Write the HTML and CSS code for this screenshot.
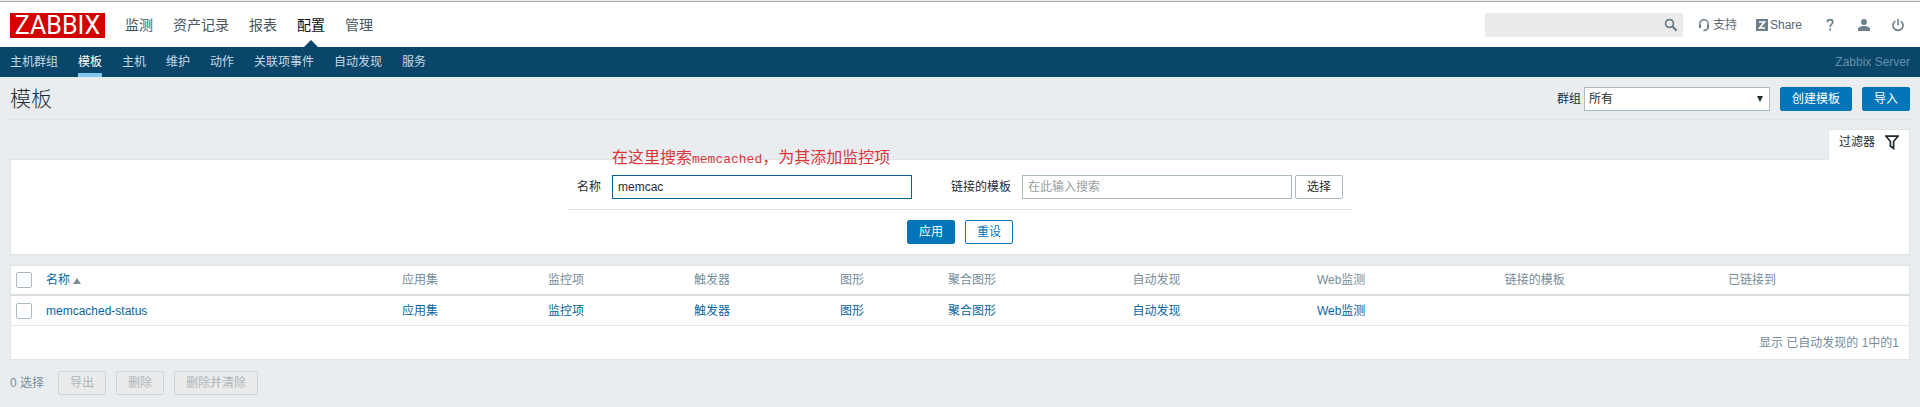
FILE: index.html
```html
<!DOCTYPE html>
<html lang="zh-CN">
<head>
<meta charset="utf-8">
<title>模板</title>
<link rel="stylesheet" href="styles.css">
</head>
<body>
<header class="top">
  <a class="logo" href="#">ZABBIX</a>
  <nav class="main-nav">
    <a href="#">监测</a>
    <a href="#">资产记录</a>
    <a href="#">报表</a>
    <a href="#" class="selected">配置</a>
    <a href="#">管理</a>
  </nav>
  <form class="search">
    <input type="text" aria-label="搜索">
    <button type="button" aria-label="搜索">
      <svg width="14" height="14" viewBox="0 0 14 14"><circle cx="5.5" cy="5.5" r="3.9" fill="none" stroke="currentColor" stroke-width="1.8"/><path d="M8.4 8.4L12.6 12.6" stroke="currentColor" stroke-width="2.2"/></svg>
    </button>
  </form>
  <div class="tools">
    <a class="support" href="#">
      <svg width="12" height="14" viewBox="0 0 12 14" fill="none" stroke="currentColor"><path d="M1.7 8V6a4.3 4.3 0 0 1 8.6 0v2c0 2.600-1 4-3.300 4.300" stroke-width="1.400"/><path d="M2 6.500v3.500M10 6.500v3.500" stroke-width="2.200"/><path d="M5.500 12.300h2" stroke-width="1.800"/></svg>
      <span>支持</span>
    </a>
    <a class="share" href="#">
      <svg width="12" height="12" viewBox="0 0 12 12"><path fill="currentColor" d="M0 0h12v12H0z"/><path d="M3 3h5.500L3.500 9H9" fill="none" stroke="#fff" stroke-width="1.600"/></svg>
      <span>Share</span>
    </a>
    <a class="tool" href="#" aria-label="帮助"><svg width="12" height="14" viewBox="0 0 12 14"><path d="M3.300 4.200C3.300 2.400 4.400 1.600 6 1.600s2.800.9 2.800 2.400C8.800 6 6.100 6.300 6.100 9" fill="none" stroke="currentColor" stroke-width="1.600"/><path fill="currentColor" d="M5.200 10.500H7v1.900H5.200z"/></svg></a>
    <a class="tool" href="#" aria-label="用户"><svg width="12" height="14" viewBox="0 0 12 14" fill="currentColor"><circle cx="6" cy="4" r="2.900"/><path d="M0 13v-2c0-2 3-3 6-3s6 1 6 3v2z"/></svg></a>
    <a class="tool" href="#" aria-label="退出"><svg width="12" height="14" viewBox="0 0 12 14" fill="none" stroke="currentColor" stroke-width="1.600"><path d="M3.200 3.200a5 5 0 1 0 5.600 0M6 1v6.300"/></svg></a>
  </div>
</header>
<nav class="sub-nav">
  <a href="#">主机群组</a>
  <a href="#" class="selected">模板</a>
  <a href="#">主机</a>
  <a href="#">维护</a>
  <a href="#">动作</a>
  <a href="#">关联项事件</a>
  <a href="#">自动发现</a>
  <a href="#">服务</a>
  <span class="server">Zabbix Server</span>
</nav>
<main>
  <div class="title-row">
    <h1>模板</h1>
    <div class="title-actions">
      <label for="group">群组</label>
      <div class="select-wrap"><select id="group"><option>所有</option></select></div>
      <button type="button" class="btn primary">创建模板</button>
      <button type="button" class="btn primary">导入</button>
    </div>
  </div>
  <div class="tab-row">
    <button type="button" class="filter-tab">过滤器
      <svg width="14" height="15" viewBox="0 0 14 15"><path d="M1 1.200h12L8.600 6.500v7L5.400 11V6.500z" fill="none" stroke="#1f2c33" stroke-width="1.700"/></svg>
    </button>
  </div>
  <form class="filter">
    <p class="note">在这里搜索<span>memcached</span>，为其添加监控项</p>
    <div class="fields">
      <div class="field">
        <label for="name">名称</label>
        <input id="name" class="name-input" type="text" value="memcac">
      </div>
      <div class="field">
        <label for="linked">链接的模板</label>
        <div class="picker">
          <input id="linked" class="linked-input" type="text" placeholder="在此输入搜索">
          <button type="button" class="btn plain">选择</button>
        </div>
      </div>
    </div>
    <div class="filter-actions">
      <button type="button" class="btn primary">应用</button>
      <button type="button" class="btn outline">重设</button>
    </div>
  </form>
  <table class="list">
    <colgroup>
      <col class="c-check"><col class="c-name"><col class="c-count"><col class="c-count"><col class="c-count"><col class="c-graph"><col class="c-mid"><col class="c-mid"><col class="c-web"><col class="c-linked"><col>
    </colgroup>
    <thead>
      <tr>
        <th><input type="checkbox" aria-label="全选"></th>
        <th><a href="#">名称 <span class="sort"></span></a></th>
        <th>应用集</th><th>监控项</th><th>触发器</th><th>图形</th><th>聚合图形</th><th>自动发现</th><th>Web监测</th><th>链接的模板</th><th>已链接到</th>
      </tr>
    </thead>
    <tbody>
      <tr>
        <td><input type="checkbox" aria-label="memcached-status"></td>
        <td><a href="#">memcached-status</a></td>
        <td><a href="#">应用集</a></td><td><a href="#">监控项</a></td><td><a href="#">触发器</a></td><td><a href="#">图形</a></td><td><a href="#">聚合图形</a></td><td><a href="#">自动发现</a></td><td><a href="#">Web监测</a></td><td></td><td></td>
      </tr>
    </tbody>
    <tfoot>
      <tr><td colspan="11">显示 已自动发现的 1中的1</td></tr>
    </tfoot>
  </table>
  <div class="bulk">
    <span>0 选择</span>
    <button type="button" class="btn" disabled>导出</button>
    <button type="button" class="btn" disabled>删除</button>
    <button type="button" class="btn" disabled>删除并清除</button>
  </div>
</main>
</body>
</html>
```
FILE: styles.css
```css
* { box-sizing: border-box; }

body {
  margin: 0;
  background: #e9edf0;
  color: #1f2c33;
  font: 12px/18px "Liberation Sans", "Noto Sans CJK SC", sans-serif;
}

a { color: #0a66a0; text-decoration: none; }
svg { display: block; }
input, select, button { font: inherit; color: inherit; margin: 0; }

/* Header */
.top {
  display: flex;
  align-items: center;
  height: 47px;
  margin-top: 1px;
  padding: 0 10px;
  background: #fff;
  border-top: 1px solid #acaeb0;
  margin-bottom: -1px;
}
.logo {
  width: 95px;
  background: #d40000;
  color: #fff;
  font: 25px/25px Roboto, sans-serif;
  text-align: center;
}
.main-nav {
  display: flex;
  align-self: stretch;
  align-items: center;
  gap: 20px;
  margin-left: 20px;
  font-size: 14px;
}
.main-nav a {
  display: flex;
  align-items: center;
  height: 100%;
  color: #48565e;
}
.main-nav .selected { position: relative; color: #0e1012; }
.main-nav .selected::after {
  content: "";
  position: absolute;
  bottom: 0;
  left: 50%;
  margin-left: -8px;
  border: 8px solid transparent;
  border-top: 0;
  border-bottom-color: #0a466a;
}
.search {
  display: flex;
  width: 198px;
  height: 24px;
  margin-left: auto;
  background: #ebebeb;
}
.search input { flex: 1; min-width: 0; border: 0; background: none; }
.search button {
  display: flex;
  align-items: center;
  padding: 0 5px;
  border: 0;
  background: none;
  color: #6d7f89;
}
.tools { display: flex; align-items: center; margin-right: 6px; }
.tools a { color: #6d7f89; }
.tools span { color: #5a6972; }
.support, .share { display: flex; align-items: center; gap: 3px; margin-left: 15px; }
.share { gap: 2px; margin-left: 19px; }
.tool { margin-left: 22px; }

/* Section navigation */
.sub-nav {
  position: relative;
  display: flex;
  gap: 20px;
  height: 30px;
  padding: 0 10px;
  background: #0a466a;
  line-height: 30px;
}
.sub-nav a { color: #c5dbe8; }
.sub-nav .selected { color: #fff; border-bottom: 4px solid #80c7f2; }
.server { margin-left: auto; color: #6290ac; }

/* Page title */
main { padding: 0 10px; }
.title-row {
  display: flex;
  justify-content: space-between;
  align-items: center;
  height: 43px;
  padding-top: 2px;
  border-bottom: 1px solid #dfe4e7;
}
h1 { margin: 0; font-size: 21px; line-height: 32px; font-weight: 300; }
.title-actions { display: flex; align-items: center; }
.select-wrap { position: relative; margin: 0 10px 0 3px; }
.select-wrap select {
  display: block;
  appearance: none;
  width: 186px;
  height: 24px;
  padding: 0 4px;
  border: 1px solid #acbbc2;
  border-radius: 0;
  background: #fff;
}
.select-wrap::after {
  content: "";
  position: absolute;
  top: 9px;
  right: 7px;
  border: 3px solid transparent;
  border-top: 6px solid #1f2c33;
  border-bottom: 0;
}
.title-actions .btn + .btn { margin-left: 10px; }

.btn {
  height: 24px;
  padding: 0 11px;
  border: 1px solid #0275b8;
  border-radius: 2px;
  line-height: 22px;
  white-space: nowrap;
}
.primary { background: #0275b8; color: #fff; }
.outline { background: #fff; color: #0275b8; }
.plain { background: #fff; border-color: #acbbc2; }
.btn:disabled { background: #ebebeb; border-color: #ccd5d9; color: #acb6ba; }

/* Filter */
.tab-row { display: flex; justify-content: flex-end; margin-top: 9px; }
.filter-tab {
  position: relative;
  z-index: 1;
  display: flex;
  align-items: center;
  gap: 10px;
  height: 31px;
  margin-bottom: -1px;
  padding: 0 10px 6px;
  border: 1px solid #dfe4e7;
  border-bottom: 0;
  background: #fff;
}
.filter {
  position: relative;
  display: flex;
  flex-direction: column;
  align-items: center;
  padding: 15px 0 10px;
  background: #fff;
  border: 1px solid #dfe4e7;
}
.note {
  position: absolute;
  left: 50%;
  top: -14px;
  margin: 0 0 0 -348px;
  color: #d9363a;
  font-size: 16px;
  line-height: 24px;
  white-space: nowrap;
}
.note span { font-family: "Liberation Mono", monospace; font-size: 13px; }
.fields {
  display: flex;
  justify-content: space-between;
  width: 784px;
  padding: 0 9px 10px;
  border-bottom: 1px solid #dfe4e7;
}
.field { display: flex; align-items: center; gap: 11px; }
.picker { display: flex; gap: 3px; }
.filter input {
  height: 24px;
  padding: 0 5px;
  border: 1px solid #acbbc2;
  background: #fff;
}
.filter .name-input { width: 300px; border-color: #0a5f94; }
.filter .linked-input { width: 270px; }
.filter input::placeholder { color: #9aa0a3; }
.filter-actions { display: flex; gap: 10px; margin-top: 10px; }

/* Template list */
.list {
  width: 100%;
  margin-top: 10px;
  table-layout: fixed;
  border-collapse: separate;
  border-spacing: 0;
  background: #fff;
  border: 1px solid #dfe4e7;
}
.c-check { width: 30px; }
.c-name { width: 18.76%; }
.c-count { width: 7.69%; }
.c-graph { width: 5.69%; }
.c-mid { width: 9.72%; }
.c-web { width: 9.9%; }
.c-linked { width: 11.76%; }
.list th, .list td {
  height: 30px;
  padding: 0 5px;
  text-align: left;
  font-weight: 400;
  vertical-align: middle;
  border-bottom: 1px solid #e6eaec;
}
.list th { color: #768d99; border-bottom: 2px solid #dcdfe1; }
.list tfoot td { height: 33px; padding: 0 10px; border: 0; text-align: right; color: #768d99; }
.list input {
  display: block;
  appearance: none;
  width: 16px;
  height: 16px;
  border: 1px solid #acbbc2;
  border-radius: 2px;
  background: #fff;
}
.sort {
  display: inline-block;
  border: 4px solid transparent;
  border-top: 0;
  border-bottom: 6px solid #768d99;
}

/* Bulk actions */
.bulk { display: flex; align-items: center; gap: 10px; padding: 11px 0; color: #768d99; }
.bulk span { margin-right: 4px; }
```
